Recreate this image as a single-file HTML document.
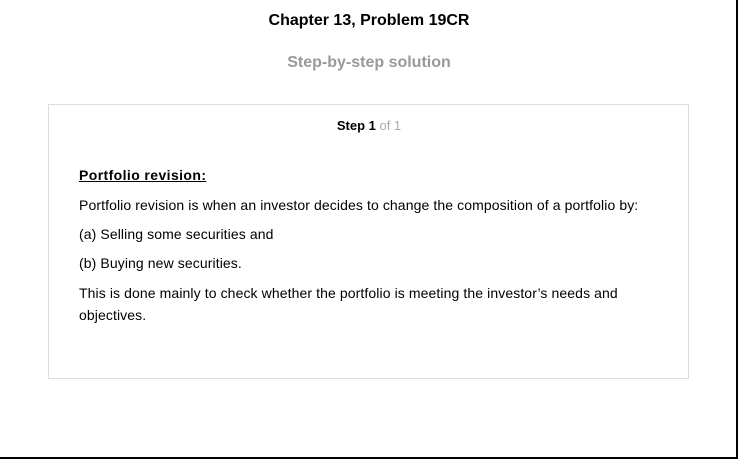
<!DOCTYPE html>
<html><head><style>
html,body{margin:0;padding:0;background:#fff}
body{width:738px;height:459px;position:relative;overflow:hidden;font-family:"Liberation Sans",Arial,sans-serif;color:#000}
.frame{position:absolute;left:0;top:0;width:736px;height:457px;border-right:2px solid #000;border-bottom:2px solid #000}
.t{position:absolute;left:0;width:738px;text-align:center;font-weight:bold;font-size:16px}
.box{position:absolute;left:48px;top:104px;width:639px;height:273px;border:1px solid #ddd}
.p{position:absolute;left:79px;font-size:14px;white-space:nowrap;letter-spacing:0.1px}
</style></head><body>
<div class="frame"></div>
<div class="t" style="top:12px">Chapter 13, Problem 19CR</div>
<div class="t" style="top:54px;color:#999">Step-by-step solution</div>
<div class="box"></div>
<div class="t" style="top:118px;font-size:13px">Step 1 <span style="font-weight:normal;color:#aaa">of 1</span></div>
<div class="p" style="top:167px;font-weight:bold;text-decoration:underline;letter-spacing:0.4px">Portfolio revision:</div>
<div class="p" style="top:197px">Portfolio revision is when an investor decides to change the composition of a portfolio by:</div>
<div class="p" style="top:226px">(a) Selling some securities and</div>
<div class="p" style="top:255px">(b) Buying new securities.</div>
<div class="p" style="top:282px;line-height:22px">This is done mainly to check whether the portfolio is meeting the investor’s needs and<br>objectives.</div>
</body></html>
